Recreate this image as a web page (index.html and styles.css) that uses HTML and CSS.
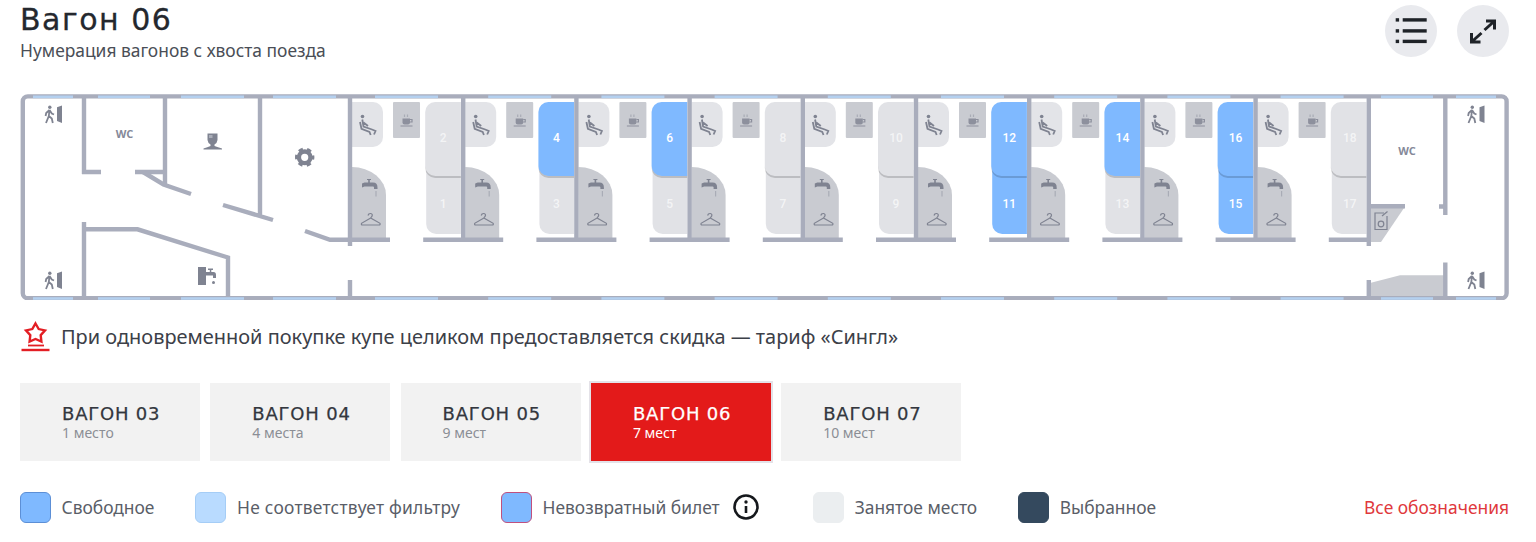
FILE: index.html
```html
<!DOCTYPE html>
<html lang="ru">
<head>
<meta charset="utf-8">
<title>Вагон 06</title>
<link rel="stylesheet" href="styles.css">
</head>
<body>
<main class="page">
  <header class="head">
    <div class="head-text">
      <h1 class="title">Вагон 06</h1>
      <p class="subtitle">Нумерация вагонов с хвоста поезда</p>
    </div>
    <div class="head-actions">
      <button class="round" type="button" aria-label="Список">
        <svg width="52" height="52" viewBox="0 0 52 52"><g class="ink-fill"><rect x="10.7" y="13.2" width="3.4" height="3.4"/><rect x="10.7" y="24.2" width="3.4" height="3.4"/><rect x="10.7" y="34.7" width="3.4" height="3.4"/><rect x="17.7" y="13.2" width="24" height="3.4"/><rect x="17.7" y="24.2" width="24" height="3.4"/><rect x="17.7" y="34.7" width="24" height="3.4"/></g></svg>
      </button>
      <button class="round" type="button" aria-label="Развернуть">
        <svg width="52" height="52" viewBox="0 0 52 52"><path class="ink-line" d="M29 16h8.5v8.5M37.500 16l-10 9M14.500 28v9h9M14.500 37l10-9"/></svg>
      </button>
    </div>
  </header>

  <svg class="wagon" viewBox="20 94 1489 206" width="1489" height="206">
    <defs>
      <g id="windows">
        <rect x="33" y="95.500" width="40" height="2.600"/><rect x="98" y="95.500" width="52" height="2.600"/><rect x="181" y="95.500" width="63" height="2.600"/><rect x="273" y="95.500" width="63" height="2.600"/>
        <rect x="375" y="95.500" width="63" height="2.600"/><rect x="488.200" y="95.500" width="63" height="2.600"/><rect x="601.400" y="95.500" width="63" height="2.600"/><rect x="714.600" y="95.500" width="63" height="2.600"/><rect x="827.800" y="95.500" width="63" height="2.600"/><rect x="941" y="95.500" width="63" height="2.600"/><rect x="1054.200" y="95.500" width="63" height="2.600"/><rect x="1167.400" y="95.500" width="63" height="2.600"/><rect x="1280.600" y="95.500" width="63" height="2.600"/>
        <rect x="1381" y="95.500" width="52" height="2.600"/><rect x="1456" y="95.500" width="40" height="2.600"/>
      </g>
      <g id="exit">
        <circle class="ic-fill" cx="4.800" cy="1.700" r="1.700"/>
        <path class="ic-line" d="M4.500 4.500 3.800 10.500 1 17.500M3.800 10.500 6.800 13 7.800 17.500M4.500 4.500 1.200 7.500 .6 10.500M4.500 4.500 6.800 8 9 9"/>
        <path class="ic-fill" d="M12 1.800 17 0V17.500L12 15.500Z"/>
      </g>
      <g id="compartment">
        <path class="rest" d="M2 102H23a10 10 0 0 1 10 10V137a10 10 0 0 1-10 10H2Z"/>
        <rect class="coffee" x="43" y="102" width="27" height="36" rx="1"/>
        <path class="sink" d="M2 167A34 28 0 0 1 36 195V238H2Z"/>
        <circle class="ic-fill" cx="12.500" cy="116.500" r="1.800"/>
        <path class="ic-line" d="M12.300 119.500 13.500 126.500 22 129.500 25.500 131 24 134.500M10 122 11.500 128.800 19.500 132 20.700 135M13.500 122.500 18 126"/>
        <path class="cup" d="M52.500 118.500H60V122.500Q60 124.500 58 124.500H54.500Q52.500 124.500 52.500 122.500Z"/>
        <path class="cup-line" d="M60 119.500H62V122H60M50.500 126H62.500"/>
        <path class="steam" d="M54.500 114.500V117M57.500 114.500V117"/>
        <path class="ic-fill" d="M17 179H21V180H19.800V182.500H23Q27.500 182.500 27.500 187.500V189H24V187.500Q24 186.500 23 186.500H14.500L12 187.500V183.500L14.500 182.500H18.200V180H17Z"/>
        <path class="steam" d="M26 191V196.500"/>
        <path class="ic-line thin" d="M18 215.500Q18.500 213.300 20.700 213.500 23 214 22 216.200L20.700 218 30 223.300Q30.500 225 29 225H12.500Q11 225 11.500 223.300L20.700 218"/>
      </g>
      <path id="seat-low" d="M-2.300 170H-37V224A10 10 0 0 0-27 234H-2.300Z"/>
      <g id="seat-up">
        <path d="M-2.300 102H-28A10 10 0 0 0-38 112V166A10 10 0 0 0-28 176H-2.300Z"/>
        <path class="seat-edge" d="M-38 166A10 10 0 0 0-28 176H-2.300V178H-28A10 10 0 0 1-38 168Z"/>
      </g>
    </defs>

    <g class="compartments">
      <use href="#compartment" x="350"/><use href="#compartment" x="463.200"/><use href="#compartment" x="576.400"/><use href="#compartment" x="689.600"/><use href="#compartment" x="802.800"/><use href="#compartment" x="916"/><use href="#compartment" x="1029.200"/><use href="#compartment" x="1142.400"/><use href="#compartment" x="1255.600"/>
    </g>

    <g class="berth" transform="translate(463.200 0)"><use href="#seat-low" class="busy"/><use href="#seat-up" class="busy"/><text class="num dim" x="-20" y="142">2</text><text class="num dim" x="-20" y="208">1</text></g>
    <g class="berth" transform="translate(576.400 0)"><use href="#seat-low" class="busy"/><use href="#seat-up" class="free"/><text class="num" x="-20" y="142">4</text><text class="num dim" x="-20" y="208">3</text></g>
    <g class="berth" transform="translate(689.600 0)"><use href="#seat-low" class="busy"/><use href="#seat-up" class="free"/><text class="num" x="-20" y="142">6</text><text class="num dim" x="-20" y="208">5</text></g>
    <g class="berth" transform="translate(802.800 0)"><use href="#seat-low" class="busy"/><use href="#seat-up" class="busy"/><text class="num dim" x="-20" y="142">8</text><text class="num dim" x="-20" y="208">7</text></g>
    <g class="berth" transform="translate(916 0)"><use href="#seat-low" class="busy"/><use href="#seat-up" class="busy"/><text class="num dim" x="-20" y="142">10</text><text class="num dim" x="-20" y="208">9</text></g>
    <g class="berth" transform="translate(1029.200 0)"><use href="#seat-low" class="free"/><use href="#seat-up" class="free"/><text class="num" x="-20" y="142">12</text><text class="num" x="-20" y="208">11</text></g>
    <g class="berth" transform="translate(1142.400 0)"><use href="#seat-low" class="busy"/><use href="#seat-up" class="free"/><text class="num" x="-20" y="142">14</text><text class="num dim" x="-20" y="208">13</text></g>
    <g class="berth" transform="translate(1255.600 0)"><use href="#seat-low" class="free"/><use href="#seat-up" class="free"/><text class="num" x="-20" y="142">16</text><text class="num" x="-20" y="208">15</text></g>
    <g class="berth" transform="translate(1368.800 0)"><use href="#seat-low" class="busy"/><use href="#seat-up" class="busy"/><text class="num dim" x="-19" y="142">18</text><text class="num dim" x="-19" y="208">17</text></g>

    <path class="sink" d="M1371 208H1404L1381 242H1371Z"/>
    <path class="sink" d="M1371 282.700 1400 275.300H1444V296H1371Z"/>
    <g class="ic-line thin"><path d="M1384 213H1375V229.500H1387V216"/><circle cx="1381" cy="224" r="2.800"/><path d="M1382 216 1387.500 211.500"/></g>

    <g class="walls">
      <rect x="22.800" y="96.400" width="1483.800" height="201.800" rx="5"/>
      <path d="M84 97V174M82 172H101M135 172H165M165 97V184"/>
      <path d="M143 172 163.500 184.500 191 194M223 205 273 220M260 97V215M305 231 330 239.800H350"/>
      <path d="M84 222V297M84 229.300H137.500L228 257.500V297"/>
      <path d="M350 97V246M350 280V297"/>
      <path d="M463.200 97V238M576.400 97V238M689.600 97V238M802.800 97V238M916 97V238M1029.200 97V238M1142.400 97V238M1255.600 97V238M1368.800 97V246M1368.800 280V297"/>
      <path d="M350 239.800H390M423.200 239.800H503.200M536.400 239.800H616.400M649.600 239.800H729.600M762.800 239.800H842.800M876 239.800H956M989.200 239.800H1069.200M1102.400 239.800H1182.400M1215.600 239.800H1295.600M1328.800 239.800H1369"/>
      <path d="M1371 206.300H1405M1445.300 97V215M1439 206.500H1445M1445.300 262.500V297"/>
    </g>

    <g class="wins"><use href="#windows"/><use href="#windows" y="201.700"/></g>

    <text class="wc" x="124.500" y="138">WC</text>
    <text class="wc" x="1407" y="155">WC</text>
    <use href="#exit" x="45" y="105.500"/><use href="#exit" x="45" y="271.500"/><use href="#exit" x="1467.500" y="105.500"/><use href="#exit" x="1467.500" y="271.500"/>
    <path class="ic-fill" d="M207.500 133.500H217.500V140Q217 143.500 214.500 144.500V146Q218 147 222 148.500V149.600H203.500V148.500Q207.500 147 210.500 146V144.500Q208 143.500 207.500 140Z"/>
    <rect class="bust-mark" x="209" y="135" width="3.500" height="3"/>
    <circle class="gear" cx="304.700" cy="157.300" r="5.800"/>
    <circle class="gear-teeth" cx="304.700" cy="157.300" r="8"/>
    <path class="ic-fill" d="M198 267H206V272H209.800V270H208V268.600H213V270H211.300V272H213.500Q216 272 216 275V278H213V275.500H206V285H198Z"/>
    <circle class="ic-fill" cx="213.500" cy="282.500" r="1.500"/>
  </svg>

  <p class="note">
    <svg class="note-icon" width="30" height="32" viewBox="0 0 30 32"><path class="star" d="M15.500 2.500 18.700 8.050 25 9.400 20.700 14.200 21.400 20.600 15.500 18 9.600 20.600 10.300 14.200 6 9.400 12.300 8.050Z"/><path class="star thin-bar" d="M8 24.500H24"/><path class="star" d="M1.500 29H29.500"/></svg>
    <span class="note-text">При одновременной покупке купе целиком предоставляется скидка — тариф «Сингл»</span>
  </p>

  <nav class="tabs">
    <a class="tab"><span class="tab-name">ВАГОН 03</span><span class="tab-sub">1 место</span></a>
    <a class="tab"><span class="tab-name">ВАГОН 04</span><span class="tab-sub">4 места</span></a>
    <a class="tab"><span class="tab-name">ВАГОН 05</span><span class="tab-sub">9 мест</span></a>
    <a class="tab tab-active"><span class="tab-name">ВАГОН 06</span><span class="tab-sub">7 мест</span></a>
    <a class="tab"><span class="tab-name">ВАГОН 07</span><span class="tab-sub">10 мест</span></a>
  </nav>

  <ul class="legend">
    <li class="legend-item"><i class="swatch sw-free"></i>Свободное</li>
    <li class="legend-item legend-long"><i class="swatch sw-nofilter"></i>Не соответствует фильтру</li>
    <li class="legend-item legend-info"><i class="swatch sw-refund"></i>Невозвратный билет
      <svg class="info" width="26" height="26" viewBox="0 0 26 26"><circle cx="13" cy="13" r="11.500"/><path d="M13 12V19"/><circle class="info-dot" cx="13" cy="8" r="1.700"/></svg>
    </li>
    <li class="legend-item"><i class="swatch sw-busy"></i>Занятое место</li>
    <li class="legend-item"><i class="swatch sw-selected"></i>Выбранное</li>
    <li class="legend-link">Все обозначения</li>
  </ul>
</main>
</body>
</html>
```

FILE: styles.css
```css
* { box-sizing: border-box; }
html, body { margin: 0; padding: 0; background: #fff; }
body { font-family: "Noto Sans", "Open Sans", sans-serif; color: #3c4048; }
.page { width: 1536px; height: 542px; padding: 0 27px 0 20px; overflow: hidden; }

.head { display: flex; justify-content: space-between; height: 94px; }
.title { margin: 2px 0 0; font: 400 30px/36px "DejaVu Sans", sans-serif; color: #24282e; letter-spacing: 1.500px; -webkit-text-stroke: .3px #24282e; }
.subtitle { margin: 1px 0 0; font-size: 17.400px; line-height: 22px; color: #4a4e56; }
.head-actions { display: flex; gap: 20.500px; padding-top: 5px; }
.round { width: 52px; height: 52px; padding: 0; border: 0; border-radius: 50%; background: #e9eaee; }
.round svg { display: block; }
.ink-fill { fill: #1f2328; }
.ink-line { fill: none; stroke: #1f2328; stroke-width: 3; }

.wagon { display: block; }
.wins { fill: #b4d0ef; }
.walls { fill: none; stroke: #a9adbc; stroke-width: 4.400; }
.rest { fill: #e3e4e8; }
.coffee, .sink { fill: #c9cbd1; }
.busy { fill: #e1e2e6; }
.free { fill: #7fb9ff; }
.seat-edge { fill: #000; fill-opacity: .16; }
.ic-fill { fill: #7f8391; }
.ic-line { fill: none; stroke: #7f8391; stroke-width: 1.800; }
.thin { stroke-width: 1.200; }
.cup { fill: #8d909d; }
.cup-line { fill: none; stroke: #8d909d; stroke-width: 1.200; }
.steam { fill: none; stroke: #a9acb6; stroke-width: 1.200; }
.bust-mark { fill: #a9adb8; }
.num { font: 500 12px "Roboto", sans-serif; fill: #fff; text-anchor: middle; }
.dim { fill-opacity: .65; }
.wc { font: 700 11px "Open Sans", sans-serif; fill: #858999; text-anchor: middle; }
.gear { fill: none; stroke: #7f8391; stroke-width: 4.400; }
.gear-teeth { fill: none; stroke: #7f8391; stroke-width: 3.400; stroke-dasharray: 4.200 4.178; stroke-dashoffset: 2.100; }

.note { display: flex; align-items: center; gap: 11px; height: 32px; margin: 21px 0 0; font-size: 19.950px; color: #3c4048; }
.note-icon { flex: none; }
.note-text { margin-top: -2px; }
.star { fill: none; stroke: #e31e24; stroke-width: 2.400; }
.thin-bar { stroke-width: 1.800; }

.tabs { display: flex; gap: 10.300px; margin-top: 30px; }
.tab { display: flex; flex-direction: column; justify-content: center; width: 180px; height: 77.500px; padding: .5px 0 0 42px; background: #f2f2f2; }
.tab-name { font: 400 18px/20px "DejaVu Sans", sans-serif; color: #33373e; letter-spacing: .8px; -webkit-text-stroke: .25px currentColor; }
.tab-sub { font-size: 14px; line-height: 17px; color: #8b8e95; }
.tab-active { background: #e31a1a; box-shadow: 0 0 0 2px #e4e2e8; }
.tab-active .tab-name, .tab-active .tab-sub { color: #fff; }

.legend { display: flex; align-items: center; gap: 41px; margin: 31px 0 0; padding: 0; list-style: none; font-size: 17.400px; line-height: 31px; color: #5a5e68; }
.legend-item { display: flex; align-items: center; gap: 10.500px; }
.legend-long { letter-spacing: .25px; }
.legend-info { margin-right: 13px; }
.swatch { flex: none; width: 31px; height: 31px; border-radius: 6px; border: 1.500px solid transparent; }
.sw-free { background: #7fb9ff; border-color: #5c8fd6; }
.sw-nofilter { background: #b9dbff; border-color: #a5cdf6; }
.sw-refund { background: #7fb9ff; border-color: #c0507e; }
.sw-busy { background: #ebeef0; border-color: #ebeef0; }
.sw-selected { background: #34495e; border-color: #34495e; }
.info { flex: none; margin-left: 3px; fill: none; stroke: #15181c; stroke-width: 2.600; }
.info-dot { fill: #15181c; stroke: none; }
.legend-link { margin-left: auto; color: #e0383c; }
```
